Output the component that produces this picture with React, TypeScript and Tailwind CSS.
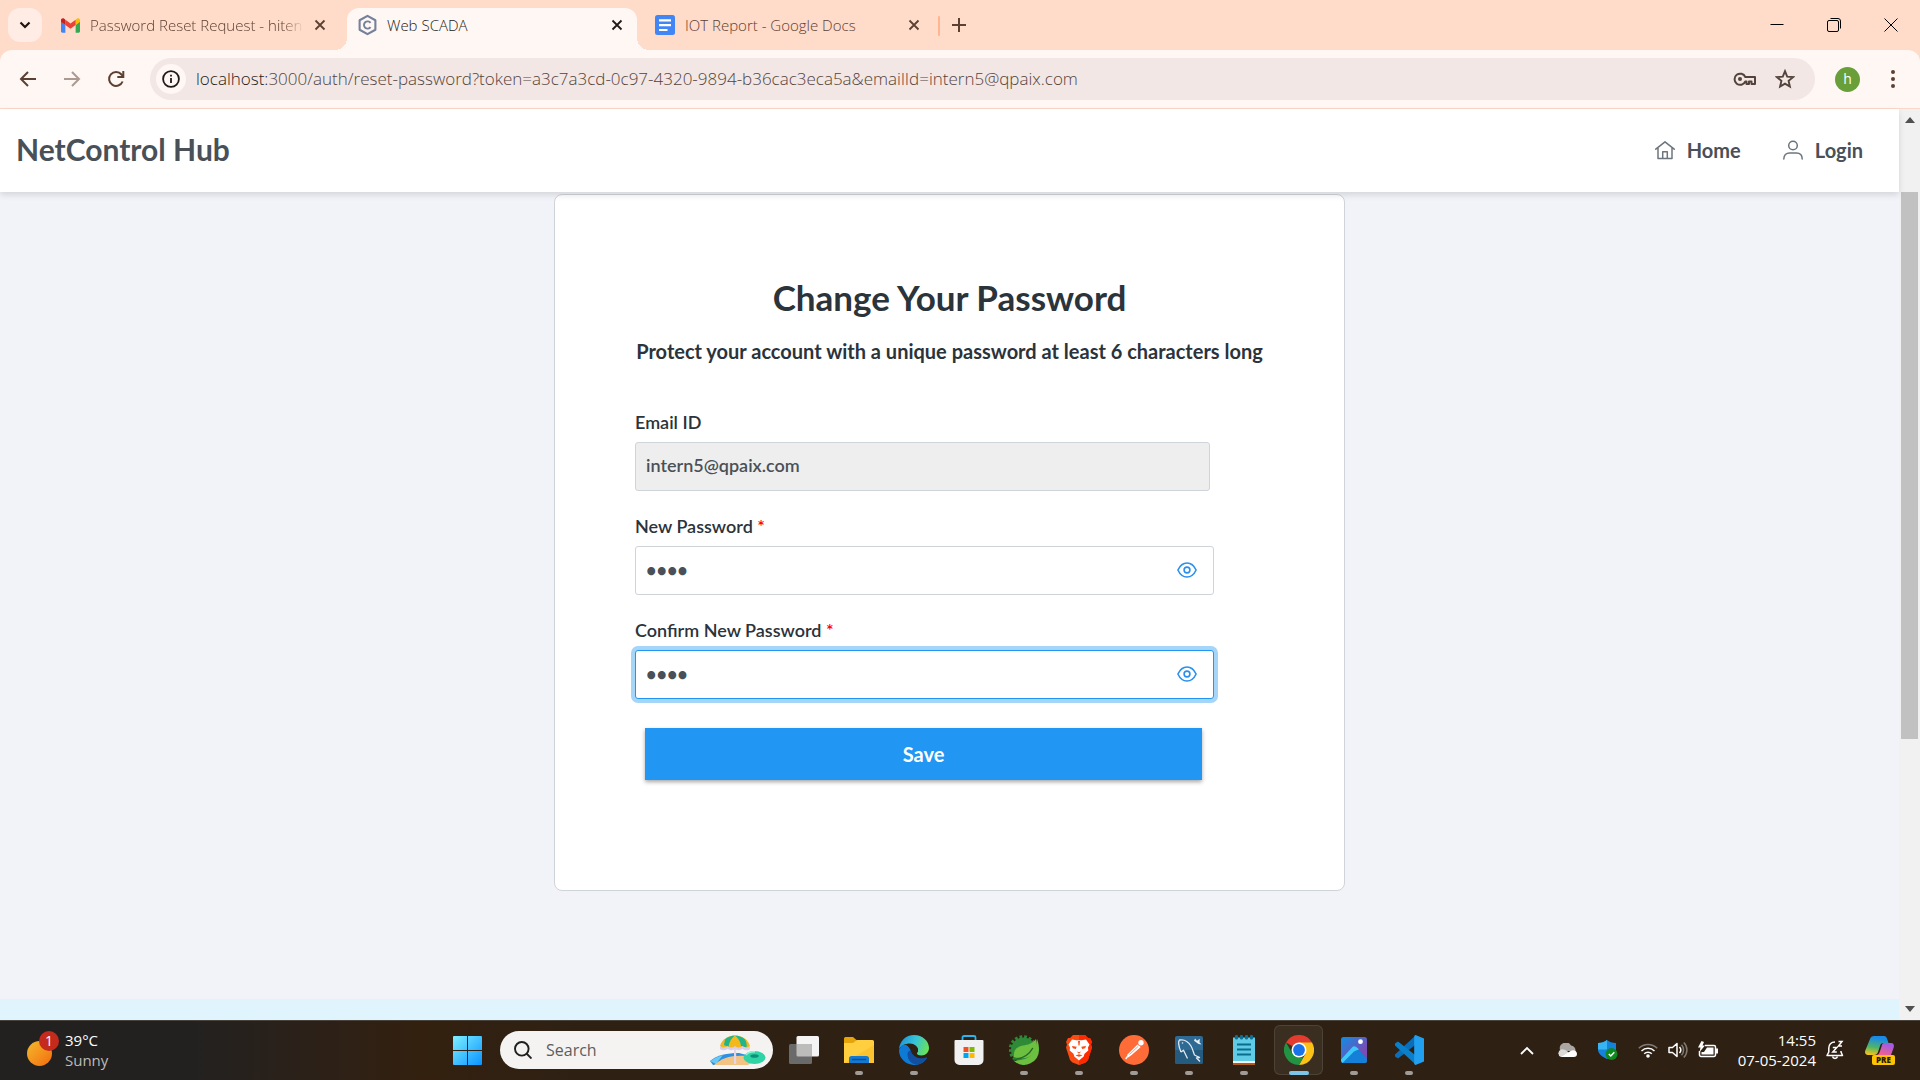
import { useState } from 'react'
import type { ReactNode } from 'react'

const fontUi = "font-['Open_Sans','Noto_Sans',sans-serif]"
const fontPage = 'font-[Lato,sans-serif]'

/* ---------- browser icons ---------- */

function CloseIcon({ className = '' }: { className?: string }) {
  return (
    <svg viewBox="0 0 12 12" className={`size-3 ${className}`} fill="none" stroke="currentColor" strokeWidth="1.8" aria-hidden="true">
      <path d="M1.5 1.5l9 9M10.5 1.5l-9 9" />
    </svg>
  )
}

function GmailIcon() {
  return (
    <svg viewBox="0 0 20 15" className="h-[15px] w-[19px]" aria-hidden="true">
      <path d="M0 3v10.6C0 14.4.6 15 1.4 15h3.2V7z" fill="#4285f4" />
      <path d="M20 3v10.6c0 .8-.6 1.400-1.400 1.400h-3.200V7z" fill="#34a853" />
      <path d="M15.400 1.500V7L20 3.500V2c0-1.800-2-2.600-3.400-1.500z" fill="#fbbc04" />
      <path d="M4.600 7V1.400L10 5.500l5.400-4.100V7L10 11z" fill="#ea4335" />
      <path d="M0 2v1.500L4.600 7V1.400L3.400.5C2-.6 0 .2 0 2z" fill="#c5221f" />
    </svg>
  )
}

function HexagonCIcon() {
  return (
    <svg viewBox="0 0 20 22" className="h-[22px] w-[19px]" fill="none" stroke="#75809a" aria-hidden="true">
      <path d="M10 1.300L18.300 6v10L10 20.700 1.700 16V6z" strokeWidth="2.200" strokeLinejoin="round" />
      <path d="M13.200 8.800A3.800 3.800 0 1 0 13.200 13.200" strokeWidth="2" />
    </svg>
  )
}

function DocsIcon() {
  return (
    <svg viewBox="0 0 20 20" className="size-5" aria-hidden="true">
      <rect width="20" height="20" rx="2.500" fill="#4285f4" />
      <path d="M4 5.400h12M4 10.200h12M4 15h8.500" stroke="#fff" strokeWidth="2.200" />
    </svg>
  )
}

function BackIcon() {
  return (
    <svg viewBox="0 0 20 20" className="size-5" fill="none" stroke="currentColor" strokeWidth="2" aria-hidden="true">
      <path d="M18 10H3.500M10 3l-7 7 7 7" />
    </svg>
  )
}

function ReloadIcon() {
  return (
    <svg viewBox="0 0 20 20" className="size-5" fill="none" stroke="currentColor" strokeWidth="2" aria-hidden="true">
      <path d="M16.600 12.500A7 7 0 1 1 15.500 5.500L17 7.200" />
      <path d="M17.300 2v6h-6" />
    </svg>
  )
}

function InfoIcon() {
  return (
    <svg viewBox="0 0 18 18" className="size-[18px]" fill="none" stroke="#1f1a18" strokeWidth="1.800" aria-hidden="true">
      <circle cx="9" cy="9" r="7.900" />
      <path d="M9 8v5M9 4.800v1.800" />
    </svg>
  )
}

function KeyIcon() {
  return (
    <svg viewBox="0 0 24 14" className="h-[14px] w-6" fill="none" stroke="#53433c" strokeWidth="2" strokeLinejoin="round" aria-hidden="true">
      <path d="M12.300 5H22v7h-3.500V9.500H16V12h-2.500V9.500h-1.200A5.600 5.600 0 1 1 12.300 5z" />
      <circle cx="7" cy="7" r="2" fill="#53433c" stroke="none" />
    </svg>
  )
}

function StarIcon() {
  return (
    <svg viewBox="0 0 20 20" className="size-5" fill="none" stroke="#53433c" strokeWidth="1.900" aria-hidden="true">
      <path d="M10 2.200l2.200 5.400 5.800.5-4.400 3.800 1.300 5.700L10 14.600l-4.900 3 1.300-5.700L2 8.100l5.800-.5z" />
    </svg>
  )
}

/* ---------- page icons ---------- */

function HomeIcon() {
  return (
    <svg viewBox="0 0 20 20" className="size-5" fill="none" stroke="#6c757d" strokeWidth="1.500" strokeLinecap="round" strokeLinejoin="round" aria-hidden="true">
      <path d="M.8 9.200L10 1.800l9.200 7.400M3 7.800v10.700h14V7.800M7.700 18.300v-6.600h4.600v6.600" />
    </svg>
  )
}

function UserIcon() {
  return (
    <svg viewBox="0 0 20 20" className="size-5" fill="none" stroke="#6c757d" strokeWidth="1.500" strokeLinecap="round" aria-hidden="true">
      <circle cx="10" cy="5.500" r="4.300" />
      <path d="M.8 19c0-4.200 2.400-6 5.800-6h6.800c3.400 0 5.800 1.800 5.800 6" />
    </svg>
  )
}

function EyeIcon() {
  return (
    <svg viewBox="0 0 20 16" className="h-4 w-5" fill="none" stroke="currentColor" strokeWidth="1.600" aria-hidden="true">
      <path d="M.9 8C3 3.500 6.200 1 10 1s7 2.500 9.100 7c-2.100 4.500-5.300 7-9.100 7S3 12.500.9 8z" />
      <circle cx="10" cy="8" r="2.900" />
    </svg>
  )
}

/* ---------- taskbar icons ---------- */

function WindowsIcon() {
  return (
    <svg viewBox="0 0 29 29" className="size-[29px]" aria-hidden="true">
      <defs>
        <linearGradient id="win" x1="0" y1="0" x2="1" y2="1">
          <stop offset="0" stopColor="#7df0ff" />
          <stop offset="1" stopColor="#0a93ff" />
        </linearGradient>
      </defs>
      <path d="M1 0h13v14H0V1a1 1 0 0 1 1-1zM15 0h13a1 1 0 0 1 1 1v13H15zM0 15h14v14H1a1 1 0 0 1-1-1zM15 15h14v13a1 1 0 0 1-1 1H15z" fill="url(#win)" />
    </svg>
  )
}

function BeachIcon() {
  return (
    <svg viewBox="0 0 56 32" className="h-8 w-14" aria-hidden="true">
      <path d="M0 27c7-6 17-8 29-8l15 4-5 7-36 1z" fill="#2f8fe0" />
      <path d="M0 27c5-3 9-5 13-6l-7 9z" fill="#67c8f2" />
      <path d="M4 31c8-7 17-10 32-9l6 6-4 3z" fill="#f3c384" />
      <path d="M24 4h2.200v26H24z" fill="#e4d5e8" />
      <path d="M10 12C12 5 18 1.500 25 1.500S38 5 40 12l-3 2.500-4-1.500-4 2-4-2-4 2-4-2-4 1.500z" fill="#f4b81d" />
      <path d="M15 5.500C17.500 3 21 1.700 25 1.500c-4 3-6 7-6.500 11.500L14 11zM25 1.500c4 .2 7.500 1.500 10 4 1.500 3 2 5 1.500 8L31 12c-.5-4-2.500-8-6-10.500z" fill="#22b58a" />
      <path d="M10 12c3 2 5 2 7.500 0 2.500 2 5 2 7.500 0 2.500 2 5 2 7.500 0 2.500 2 5 2 7.500 0v3c-2 2-5 1.500-7.500 0-2.500 1.500-5 1.500-7.500 0-2.500 1.500-5 1.500-7.500 0-2.500 1.500-5 2-7.500 0z" fill="#d9cde9" />
      <ellipse cx="44.500" cy="23.500" rx="11" ry="6.500" fill="#2ed3a6" />
      <ellipse cx="44.500" cy="22" rx="4.200" ry="1.800" fill="#0e8f78" />
      <path d="M36 21c2-3 6-3.500 9-3.200" stroke="#93f3d6" strokeWidth="1.500" fill="none" />
    </svg>
  )
}

function TaskViewIcon() {
  return (
    <svg viewBox="0 0 30 30" className="size-[30px]" aria-hidden="true">
      <rect x="7.500" y="1" width="22.500" height="20.500" rx="1.500" fill="#f4f4f4" />
      <rect x="0" y="9" width="23" height="20" rx="1.500" fill="#6b6a6a" />
      <path d="M7.500 9H21.500A1.500 1.500 0 0 1 23 10.500V21.500H9A1.500 1.500 0 0 1 7.500 20z" fill="#bcbcbb" />
    </svg>
  )
}

function FolderIcon() {
  return (
    <svg viewBox="0 0 30 30" className="size-[30px]" aria-hidden="true">
      <path d="M0 3.500A1.500 1.500 0 0 1 1.500 2H9l4 3.500V10H0z" fill="#e5a50a" />
      <path d="M0 8h9l4-3h15.500A1.500 1.500 0 0 1 30 6.500V28H0z" fill="#ffcf3f" />
      <path d="M0 28l30-18v18z" fill="#fcc32e" />
      <path d="M5 28v-4.500A2.500 2.500 0 0 1 7.500 21h15a2.500 2.500 0 0 1 2.500 2.500V28z" fill="#1379d2" />
      <path d="M8.500 24.500h13" stroke="#0b4f96" strokeWidth="1.500" strokeLinecap="round" />
    </svg>
  )
}

function EdgeIcon() {
  return (
    <svg viewBox="0 0 30 30" className="size-[30px]" aria-hidden="true">
      <defs>
        <linearGradient id="edgeTop" x1="0" y1="0.300" x2="1" y2="0.600">
          <stop offset="0" stopColor="#1d94dc" />
          <stop offset="0.500" stopColor="#37c5d6" />
          <stop offset="1" stopColor="#6be256" />
        </linearGradient>
      </defs>
      <path d="M0 15a15 15 0 0 0 15 15c5.500 0 10-2.500 13-7-8 3-16.500-1-16.500-8C8 8 3 8 0 15z" fill="#0f7ad6" />
      <path d="M8.500 19c0 6 4 10.500 9.500 10.700 4-.6 7.500-3 9.800-6.500.3-.6-.2-1-.8-.8-6.500 2.500-14-.5-15-7.400-2 .5-3.500 2-3.500 4z" fill="#124f9f" />
      <path d="M0 14.500C.5 6 7 0 15 0c8.500 0 15 6 15 13 0 4.500-3.500 7.500-7.500 7.500-2.800 0-4.700-.9-4.700-2 0-.8 1.200-1.200 1.200-3.500 0-3.300-3.500-6.500-8-6.500C6 8.500 1.500 10.500 0 14.500z" fill="url(#edgeTop)" />
      <path d="M12 15c0-2 1.500-3.500 3.500-3.500S19 13 19 15c0 2-1.200 2.700-1.200 3.500 0 .7.700 1.400 2 1.700-4 .8-7.800-1.400-7.800-5.200z" fill="#2e2114" />
    </svg>
  )
}

function StoreIcon() {
  return (
    <svg viewBox="0 0 30 30" className="size-[30px]" aria-hidden="true">
      <path d="M8.500 7V2.500a1.500 1.500 0 0 1 1.500-1.500h10a1.500 1.500 0 0 1 1.500 1.500V7" stroke="#2bb5ee" strokeWidth="1.800" fill="none" />
      <path d="M.5 6A1 1 0 0 1 1.500 5h27a1 1 0 0 1 1 1v19a5 5 0 0 1-5 5h-19a5 5 0 0 1-5-5z" fill="#f1f1f1" />
      <path d="M9.500 12h5v5h-5z" fill="#f25022" />
      <path d="M15.500 12h5v5h-5z" fill="#7fba00" />
      <path d="M9.500 18h5v5h-5z" fill="#00a4ef" />
      <path d="M15.500 18h5v5h-5z" fill="#ffb900" />
    </svg>
  )
}

function SpringIcon() {
  return (
    <svg viewBox="0 0 30 30" className="size-[30px]" aria-hidden="true">
      <circle cx="14" cy="14.500" r="12.800" fill="none" stroke="#2f8a38" strokeWidth="3" strokeDasharray="2.700 2" />
      <circle cx="14.500" cy="15" r="12.500" fill="#2f8a38" />
      <path d="M28 4c1.500 4 2 7 2 11a15 15 0 0 1-25 11c8-1 18-2 21-12 .8-3 1.500-6 2-10z" fill="#6cbf3f" />
      <path d="M5 22c-1-7 3-10.500 9-11.500 5-.8 9-1.500 13-6.500 1 6 .5 12-4 16-4.500 4-11 4-18 2z" fill="#6cbf3f" />
      <path d="M4.500 24.500c8-.5 15-4 19-11" stroke="#23692c" strokeWidth="1.500" fill="none" strokeLinecap="round" />
    </svg>
  )
}

function BraveIcon() {
  return (
    <svg viewBox="0 0 30 30" className="size-[30px]" aria-hidden="true">
      <path d="M9 0h12l3 3h2l2 4-1 2.500 1 3-4 12.500-2.500 2.500L15 30l-6.500-2.500L6 25 2 12.500l1-3L2 7l2-4h2z" fill="#fb4a12" />
      <path d="M15 0h6l3 3h2l2 4-1 2.500 1 3-4 12.500-2.500 2.500L15 30z" fill="#ff2a00" />
      <path d="M8 4.500l4.500.8h5l4.500-.8 3.500 5-1.500 3 .3 3-3.800 3.200-.8 2.800L15 25.500l-4.700-4-.8-2.800-3.800-3.200.3-3-1.500-3z" fill="#fff" />
      <path d="M8 11l4.700.8-.9 2.200-3-.7zM22 11l-4.700.8.9 2.200 3-.7zM14 6h2l-.5 4.500h-1zM12.800 16.500l2.200.8 2.200-.8-2.200 2.200zM11.500 20.500l3.500-1.200 3.500 1.200-3.500 1.300z" fill="#fb4a12" />
    </svg>
  )
}

function PostmanIcon() {
  return (
    <svg viewBox="0 0 30 30" className="size-[30px]" aria-hidden="true">
      <circle cx="15" cy="15" r="15" fill="#ff6c37" />
      <path d="M8 20L18.500 9.500l3 2.800L12 20.500z" fill="#fff" />
      <circle cx="22" cy="7.700" r="2.700" fill="#fff" />
      <path d="M7 23.500l3-4M9.500 21.500l11-10" stroke="#fff" strokeWidth="1.500" strokeLinecap="round" />
      <path d="M10.500 19.500l8.500-8" stroke="#ff9a77" strokeWidth="1" />
    </svg>
  )
}

function WorkbenchIcon() {
  return (
    <svg viewBox="0 0 30 30" className="size-[30px]" aria-hidden="true">
      <rect x="1" y="1" width="28" height="28" rx="2" fill="#2e6a94" />
      <path d="M1 15h28v12a2 2 0 0 1-2 2H3a2 2 0 0 1-2-2z" fill="#265b80" />
      <path d="M7 17C5 12 3.500 7 5.500 5c5-1 9 2 11.500 6 2 3.500 2.500 7 3.500 9l5 2.500-3 .5 3.500 3.500M7 17l2.500-1.800 4 8.300" stroke="#dfeaf1" strokeWidth="1.300" fill="none" strokeLinejoin="round" />
      <path d="M21 3.500l2 2.200 2.800-2-.3 3.600 2 2.200-3-.5-4.500-3.200z" fill="#e8eff3" />
      <circle cx="8.500" cy="8" r=".8" fill="#dfeaf1" />
    </svg>
  )
}

function NotepadIcon() {
  return (
    <svg viewBox="0 0 30 30" className="size-[30px]" aria-hidden="true">
      <path d="M4 2.500h22V27H4z" fill="#5fcbe4" />
      <path d="M4 26h22v2H4z" fill="#f2f2f2" />
      <path d="M4 28h22v2H4z" fill="#b05a17" />
      <path d="M8 9.500h14M8 14.500h14M8 19.500h14" stroke="#0a6d8e" strokeWidth="1.800" />
      <path d="M7.500 1.500v1.500M12.500 1.500v1.500M17.500 1.500v1.500M22.500 1.500v1.500" stroke="#106e92" strokeWidth="3.200" strokeLinecap="round" />
    </svg>
  )
}

function ChromeIcon() {
  return (
    <svg viewBox="0 0 30 30" className="size-[30px]" aria-hidden="true">
      <path d="M15 15L2 7.500A15 15 0 0 1 28 7.500z" fill="#e33b2e" />
      <path d="M15 7.500h13A15 15 0 0 1 15 30l6.500-11.200z" fill="#fbc116" />
      <path d="M2 7.500l6.500 11.300L15 22.500h4.300L15 30A15 15 0 0 1 2 7.500z" fill="#229342" />
      <circle cx="15" cy="15" r="7.500" fill="#fff" />
      <circle cx="15" cy="15" r="5.900" fill="#1a73e8" />
    </svg>
  )
}

function PhotosIcon() {
  return (
    <svg viewBox="0 0 30 30" className="size-[30px]" aria-hidden="true">
      <defs>
        <linearGradient id="photos" x1="0" y1="0" x2="1" y2="1">
          <stop offset="0.100" stopColor="#1b86e0" />
          <stop offset="0.700" stopColor="#7a4cb4" />
        </linearGradient>
      </defs>
      <rect x="2" y="2" width="26" height="26" rx="2.500" fill="url(#photos)" />
      <path d="M2 25l11-12.500a3 3 0 0 1 4.400 0L28 24v1.500a2.500 2.500 0 0 1-2.500 2.500h-21A2.500 2.500 0 0 1 2 25.500z" fill="#1480d8" />
      <path d="M3.500 28L15 16.500l5-2.200-2.800-2.200a3 3 0 0 0-4.200.4L2 24.500v1.200z" fill="#3ec9fb" />
      <circle cx="21.500" cy="6.700" r="2.400" fill="#fff" />
    </svg>
  )
}

function VsCodeIcon() {
  return (
    <svg viewBox="0 0 30 30" className="size-[30px]" aria-hidden="true">
      <path d="M1 19.500L21 1l2 7.500L4 23.500 1 21.500z" fill="#0a6fb8" />
      <path d="M1 10.500v-2L4 6.500 23 21.500 21 29z" fill="#0a80cc" />
      <path d="M21.500 0L30 3.500v23L21.500 30c-.8-.2-1.300-1-1.300-2V2c0-1 .5-1.800 1.300-2z" fill="#22a0f0" />
    </svg>
  )
}

function CopilotIcon() {
  return (
    <svg viewBox="0 0 30 30" className="size-[30px]" aria-hidden="true">
      <defs>
        <linearGradient id="copilotLeft" x1="0.500" y1="0" x2="0.300" y2="1">
          <stop offset="0.100" stopColor="#1b8ae6" />
          <stop offset="0.600" stopColor="#4fb568" />
          <stop offset="1" stopColor="#f5c518" />
        </linearGradient>
        <linearGradient id="copilotRight" x1="0.800" y1="0" x2="0.300" y2="1">
          <stop offset="0.100" stopColor="#a05be8" />
          <stop offset="1" stopColor="#f5608a" />
        </linearGradient>
      </defs>
      <path d="M9 1h10c2 0 3 2 3.500 4l1 3h-5c-2 0-3 1-3.500 3l-2 6c-.6 2-2 3-4 3H3c-2.500 0-3.500-2-2.700-4.500L5 4c.7-2 2-3 4-3z" fill="url(#copilotLeft)" />
      <path d="M19 8h7c2.500 0 3.500 2 2.700 4.500L26 20H11c2 0 3-1 3.700-3l2-6c.4-1.800 1-3 2.300-3z" fill="url(#copilotRight)" />
      <rect x="7" y="20" width="23" height="10" rx="2" fill="#ffc400" />
      <text x="18.500" y="28" textAnchor="middle" fontSize="8" fontWeight="800" fill="#2b1c00" fontFamily="Open Sans, sans-serif">
        PRE
      </text>
    </svg>
  )
}

/* ---------- browser chrome ---------- */

interface TabProps {
  icon: ReactNode
  title: string
  active?: boolean
  faded?: boolean
}

function Tab({ icon, title, active = false, faded = false }: TabProps) {
  return (
    <div
      className={`relative flex h-[42px] w-[290px] items-center gap-2.5 pr-[14px] pb-2 pl-[11px] text-[15px] font-light ${
        active ? 'rounded-t-xl bg-[#fff7f4] text-[#241a15]' : 'text-[#5c4032]'
      }`}
    >
      {active && (
        <>
          <span className="absolute bottom-0 -left-3 size-3 bg-[radial-gradient(circle_at_0_0,transparent_12px,#fff7f4_12px)]" />
          <span className="absolute -right-3 bottom-0 size-3 bg-[radial-gradient(circle_at_100%_0,transparent_12px,#fff7f4_12px)]" />
        </>
      )}
      {icon}
      <span className={`flex-1 whitespace-nowrap ${faded ? 'mask-r-from-90% mask-r-to-100%' : ''}`}>{title}</span>
      <button type="button" aria-label={`Close ${title}`}>
        <CloseIcon />
      </button>
    </div>
  )
}

function TabStrip() {
  return (
    <div className="flex h-[50px] items-start bg-[#ffdbc9] pt-2">
      <button type="button" aria-label="Search tabs" className="ml-2 flex size-[34px] items-center justify-center rounded-xl bg-[#ffece4]">
        <svg viewBox="0 0 12 8" className="h-2 w-3" fill="none" stroke="#1f1511" strokeWidth="2.200" aria-hidden="true">
          <path d="M1.500 1.500L6 6l4.500-4.500" />
        </svg>
      </button>
      <div className="ml-2 flex gap-[7px]">
        <Tab icon={<GmailIcon />} title="Password Reset Request - hiten" faded />
        <Tab icon={<HexagonCIcon />} title="Web SCADA" active />
        <Tab icon={<DocsIcon />} title="IOT Report - Google Docs" />
      </div>
      <span className="mt-2 ml-1 h-5 w-0.5 rounded-full bg-[#ffb690]" />
      <button type="button" aria-label="New tab" className="mt-2.5 ml-3 text-[#5c4032]">
        <svg viewBox="0 0 14 14" className="size-3.5" stroke="currentColor" strokeWidth="2" aria-hidden="true">
          <path d="M7 0v14M0 7h14" />
        </svg>
      </button>
      <div className="ml-auto flex gap-[43px] pt-2.5 pr-[22px]">
        <button type="button" aria-label="Minimize">
          <svg viewBox="0 0 14 14" className="size-3.5" stroke="#000" aria-hidden="true">
            <path d="M.5 6.500h13" />
          </svg>
        </button>
        <button type="button" aria-label="Restore">
          <svg viewBox="0 0 14 14" className="size-3.5" fill="none" stroke="#000" aria-hidden="true">
            <rect x=".5" y="2.500" width="11" height="11" rx="1.500" />
            <path d="M3.500.5H11A2.500 2.500 0 0 1 13.500 3v7.500" />
          </svg>
        </button>
        <button type="button" aria-label="Close window">
          <svg viewBox="0 0 14 14" className="size-3.5" stroke="#000" aria-hidden="true">
            <path d="M.5.5l13 13M13.500.5l-13 13" />
          </svg>
        </button>
      </div>
    </div>
  )
}

function Toolbar() {
  return (
    <div className="bg-[#ffdbc9]">
      <div className="flex h-[59px] items-center rounded-t-xl border-b border-[#fbd8ca] bg-[#fff7f4] pr-6 pl-[18px] text-[#5c4032]">
        <div className="flex gap-6">
          <button type="button" aria-label="Back">
            <BackIcon />
          </button>
          <button type="button" aria-label="Forward" className="rotate-180 opacity-50">
            <BackIcon />
          </button>
          <button type="button" aria-label="Reload">
            <ReloadIcon />
          </button>
        </div>
        <div className="ml-6 flex h-[42px] flex-1 items-center rounded-full bg-[#f2e7e4] pr-5 pl-1.5">
          <button type="button" aria-label="View site information" className="flex size-[30px] items-center justify-center rounded-full bg-[#fff7f4]">
            <InfoIcon />
          </button>
          <p className="ml-2.5 flex-1 text-[17px] font-light whitespace-nowrap text-[#53433c]">
            <span className="text-[#1f1a18]">localhost:</span>
            3000/auth/reset-password?token=a3c7a3cd-0c97-4320-9894-b36cac3eca5a&amp;emailId=intern5@qpaix.com
          </p>
          <button type="button" aria-label="Manage passwords" className="mr-[18px]">
            <KeyIcon />
          </button>
          <button type="button" aria-label="Bookmark this tab">
            <StarIcon />
          </button>
        </div>
        <button type="button" aria-label="Profile" className="ml-5 flex size-[25px] items-center justify-center rounded-full bg-[#689f38] text-sm leading-none text-white">
          h
        </button>
        <button type="button" aria-label="Menu" className="ml-[30px]">
          <svg viewBox="0 0 6 20" className="h-5 w-1.5" fill="currentColor" aria-hidden="true">
            <circle cx="3" cy="3" r="2" />
            <circle cx="3" cy="10" r="2" />
            <circle cx="3" cy="17" r="2" />
          </svg>
        </button>
      </div>
    </div>
  )
}

/* ---------- page ---------- */

function SiteHeader() {
  return (
    <header className="relative z-10 flex h-[83px] items-center justify-between bg-white pr-9 pb-0.5 pl-4 text-[#495057] shadow-[0_3px_6px_rgba(0,0,0,0.12)]">
      <h1 className="text-[30px] font-bold">NetControl Hub</h1>
      <nav className="flex gap-[42px] text-xl font-bold">
        <a href="#home" className="flex items-center gap-3">
          <HomeIcon />
          Home
        </a>
        <a href="#login" className="flex items-center gap-3">
          <UserIcon />
          Login
        </a>
      </nav>
    </header>
  )
}

interface PasswordFieldProps {
  id: string
  label: string
  focused?: boolean
}

function PasswordField({ id, label, focused = false }: PasswordFieldProps) {
  const [value, setValue] = useState('1234')
  const [visible, setVisible] = useState(false)

  return (
    <div className="flex flex-col gap-1.5">
      <label htmlFor={id} className="text-lg font-semibold">
        {label} <span className="text-[#ff0000]">*</span>
      </label>
      <div className="relative">
        <input
          id={id}
          type={visible ? 'text' : 'password'}
          value={value}
          onChange={(event) => setValue(event.target.value)}
          className={`h-[49px] w-full rounded-[3px] border bg-white px-2.5 pb-0.5 text-lg font-bold text-[#495057] outline-none ${
            focused ? 'border-[#2196f3] shadow-[0_0_0_4px_#a6d5fa]' : 'border-[#ced4da]'
          }`}
        />
        <button
          type="button"
          aria-label="Toggle visibility"
          onClick={() => setVisible(!visible)}
          className="absolute top-4 right-[17px] text-[#2b8ff0]"
        >
          <EyeIcon />
        </button>
      </div>
    </div>
  )
}

function ResetPasswordCard() {
  return (
    <section className="mx-auto mt-0.5 flex min-h-[697px] w-[791px] flex-col rounded-lg border border-[#ced4da] bg-white px-20 pt-[78px] text-[#2b333b]">
      <h2 className="text-center text-[35px] leading-[48px] font-bold">Change Your Password</h2>
      <p className="mt-2 -mx-2 text-center text-xl leading-[44px] font-bold whitespace-nowrap">
        Protect your account with a unique password at least 6 characters long
      </p>
      <form className="mt-[35px] flex w-[579px] flex-col gap-[21px]" onSubmit={(event) => event.preventDefault()}>
        <div className="flex flex-col gap-1.5 pr-1">
          <label htmlFor="email" className="text-lg font-semibold">
            Email ID
          </label>
          <input
            id="email"
            type="email"
            readOnly
            value="intern5@qpaix.com"
            className="h-[49px] rounded-[3px] border border-[#ced4da] bg-[#eeeeee] px-2.5 pb-1 text-lg font-semibold text-[#495057] outline-none"
          />
        </div>
        <PasswordField id="new-password" label="New Password" />
        <PasswordField id="confirm-password" label="Confirm New Password" focused />
        <button
          type="submit"
          className="mt-2 mr-3 ml-2.5 h-[52px] bg-[#2196f3] text-xl font-bold text-white shadow-[0_2px_4px_rgba(0,0,0,0.35)]"
        >
          Save
        </button>
      </form>
    </section>
  )
}

function Scrollbar() {
  return (
    <div className="flex w-[21px] flex-col items-center bg-[#f1f1f1] text-[#505050]" aria-hidden="true">
      <svg viewBox="0 0 10 6" className="mt-2 h-1.5 w-2.5" fill="currentColor">
        <path d="M0 6l5-6 5 6z" />
      </svg>
      <div className="mt-[69px] h-3/5 w-[17px] bg-[#c1c1c1]" />
      <svg viewBox="0 0 10 6" className="mt-auto mb-2 h-1.5 w-2.5" fill="currentColor">
        <path d="M0 0l5 6 5-6z" />
      </svg>
    </div>
  )
}

/* ---------- taskbar ---------- */

const apps = [
  { name: 'Task View', icon: <TaskViewIcon />, running: false, active: false },
  { name: 'File Explorer', icon: <FolderIcon />, running: true, active: false },
  { name: 'Edge', icon: <EdgeIcon />, running: true, active: false },
  { name: 'Store', icon: <StoreIcon />, running: false, active: false },
  { name: 'Spring Tools', icon: <SpringIcon />, running: true, active: false },
  { name: 'Brave', icon: <BraveIcon />, running: true, active: false },
  { name: 'Postman', icon: <PostmanIcon />, running: true, active: false },
  { name: 'MySQL Workbench', icon: <WorkbenchIcon />, running: true, active: false },
  { name: 'Notepad', icon: <NotepadIcon />, running: true, active: false },
  { name: 'Chrome', icon: <ChromeIcon />, running: true, active: true },
  { name: 'Photos', icon: <PhotosIcon />, running: true, active: false },
  { name: 'VS Code', icon: <VsCodeIcon />, running: true, active: false },
]

function WeatherWidget() {
  return (
    <button type="button" className="flex w-[453px] items-center gap-2 pl-[27px] text-left">
      <span className="relative block size-[30px]">
        <span className="absolute top-1.5 left-0 size-[25px] rounded-full bg-linear-to-br from-[#f2b92c] to-[#f2690c]" />
        <span className="absolute -top-1 left-3 flex size-5 items-center justify-center rounded-full bg-[#c42b1c] text-sm leading-none text-white">
          1
        </span>
      </span>
      <span className="flex flex-col text-[15px] leading-5 text-white">
        39°C
        <span className="text-[#bdbbb9]">Sunny</span>
      </span>
    </button>
  )
}

function SystemTray() {
  return (
    <div className="ml-auto flex items-center pr-[25px] text-white">
      <svg viewBox="0 0 14 9" className="h-[9px] w-3.5" fill="none" stroke="currentColor" strokeWidth="1.800" aria-label="Hidden icons">
        <path d="M1 8l6-6 6 6" />
      </svg>
      <svg viewBox="0 0 20 14" className="ml-[23px] h-3.5 w-5" aria-label="OneDrive">
        <path d="M3 7a6 6 0 0 1 11-4.500A5 5 0 0 1 18.500 8L10 8z" fill="#a9a6a3" />
        <path d="M4 14a4 4 0 0 1 0-7.500c2-.5 4 .5 6 1.500l6 5.500z" fill="#dcdad8" />
        <path d="M4 14l10-6.300c3-1.500 6 .5 6 3A3.300 3.300 0 0 1 16.700 14z" fill="#fff" />
      </svg>
      <svg viewBox="0 0 20 20" className="ml-[21px] size-5" aria-label="Security">
        <path d="M0 3c4 0 6.500-1 9-3 2.500 2 5 3 9 3v6.500c0 4-3.500 7-9 9.500-5.500-2.500-9-5.500-9-9.500z" fill="#1583dd" />
        <path d="M0 3c4 0 6.500-1 9-3v9.500H0z" fill="#39b4f2" />
        <circle cx="13.500" cy="14" r="6" fill="#0f8a1d" />
        <path d="M10.800 14l2 2 3.500-3.800" stroke="#fff" strokeWidth="1.500" fill="none" />
      </svg>
      <svg viewBox="0 0 20 16" className="ml-5 h-4 w-5" fill="none" stroke="currentColor" strokeWidth="1.500" aria-label="Wi-Fi">
        <path d="M.8 6.200a13 13 0 0 1 18.400 0" opacity="0.400" />
        <path d="M3.500 9a9.200 9.200 0 0 1 13 0M6.200 11.800a5.400 5.400 0 0 1 7.600 0" />
        <circle cx="10" cy="14" r="1.800" fill="currentColor" stroke="none" />
      </svg>
      <svg viewBox="0 0 20 18" className="ml-2.5 h-[18px] w-5" fill="none" stroke="currentColor" strokeWidth="1.500" aria-label="Volume">
        <path d="M1 6.500h3.500L9 2.500v13l-4.500-4H1z" strokeLinejoin="round" />
        <path d="M11.500 6a4.500 4.500 0 0 1 0 6" />
        <path d="M13.500 3.800a7.500 7.500 0 0 1 0 10.400M15.800 1.500a10.600 10.600 0 0 1 0 15" opacity="0.400" />
      </svg>
      <svg viewBox="0 0 20 18" className="ml-2.5 h-[18px] w-5" aria-label="Battery">
        <path d="M7 4.500h9A1.500 1.500 0 0 1 17.500 6v8a1.500 1.500 0 0 1-1.500 1.500H3A1.500 1.500 0 0 1 1.500 14V10" fill="none" stroke="#fff" strokeWidth="1.500" />
        <path d="M9 6.500h6.500v7H3.500V11H6zM18 7.500h2v5h-2zM3.500 0L0 6.500h2.500L1.500 11 7 4.500H4.500L6 1z" fill="#fff" />
      </svg>
      <div className="ml-5 flex flex-col text-right text-[15px] leading-5">
        <time>14:55</time>
        <time>07-05-2024</time>
      </div>
      <svg viewBox="0 0 18 20" className="ml-2.5 h-5 w-[18px]" fill="none" stroke="currentColor" strokeWidth="1.500" aria-label="Notifications">
        <path d="M9 2C5 2 2.800 4.500 2.800 8v4L1 15.500h15.500L15 12v-1" strokeLinejoin="round" />
        <path d="M6.500 16.500a2.600 2.600 0 0 0 5 0M6.800 7.500h4L6.800 12h4M12.500 1.500H16L12.500 6H16" />
      </svg>
      <button type="button" aria-label="Copilot" className="ml-[21px]">
        <CopilotIcon />
      </button>
    </div>
  )
}

function Taskbar() {
  return (
    <footer className="flex h-[60px] border-t border-[#4a433b] bg-linear-to-r from-[#232120] from-10% via-[#33200f] via-22% to-[#2e2114] to-30% pb-px">
      <WeatherWidget />
      <div className="flex items-center">
        <button type="button" aria-label="Start">
          <WindowsIcon />
        </button>
        <label className="ml-[18px] flex h-[38px] w-[273px] items-center rounded-full bg-[#f4f3f2] pr-[7px] pl-3.5">
          <svg viewBox="0 0 18 18" className="size-[18px] shrink-0" fill="none" stroke="#1f1f1f" strokeWidth="1.900" aria-hidden="true">
            <circle cx="7.800" cy="7.800" r="6.800" />
            <path d="M12.500 12.500l5 5" />
          </svg>
          <input type="search" aria-label="Search" placeholder="Search" className="ml-3.5 min-w-0 flex-1 text-base outline-none placeholder:text-[#5f5d5b]" />
          <BeachIcon />
        </label>
        <div className="ml-[3px] flex">
          {apps.map((app) => (
            <button
              key={app.name}
              type="button"
              aria-label={app.name}
              className="relative flex h-[58px] w-[55px] items-center justify-center"
            >
              {app.active && <span className="absolute inset-x-[3px] inset-y-1 rounded-md border border-white/10 bg-white/6" />}
              <span className="relative">{app.icon}</span>
              {app.running && (
                <span
                  className={`absolute bottom-1 h-1 rounded-full ${app.active ? 'w-5 bg-[#7cc4e8]' : 'w-2 bg-[#a09b96]'}`}
                />
              )}
            </button>
          ))}
        </div>
      </div>
      <SystemTray />
    </footer>
  )
}

export default function App() {
  return (
    <div className={`flex min-h-screen flex-col ${fontUi}`}>
      <TabStrip />
      <Toolbar />
      <div className="flex flex-1">
        <div className={`flex min-w-0 flex-1 flex-col bg-[#f2f3f8] ${fontPage}`}>
          <SiteHeader />
          <main className="flex-1">
            <ResetPasswordCard />
          </main>
          <div className="h-[21px] bg-[#e0f4fe]" />
        </div>
        <Scrollbar />
      </div>
      <Taskbar />
    </div>
  )
}
